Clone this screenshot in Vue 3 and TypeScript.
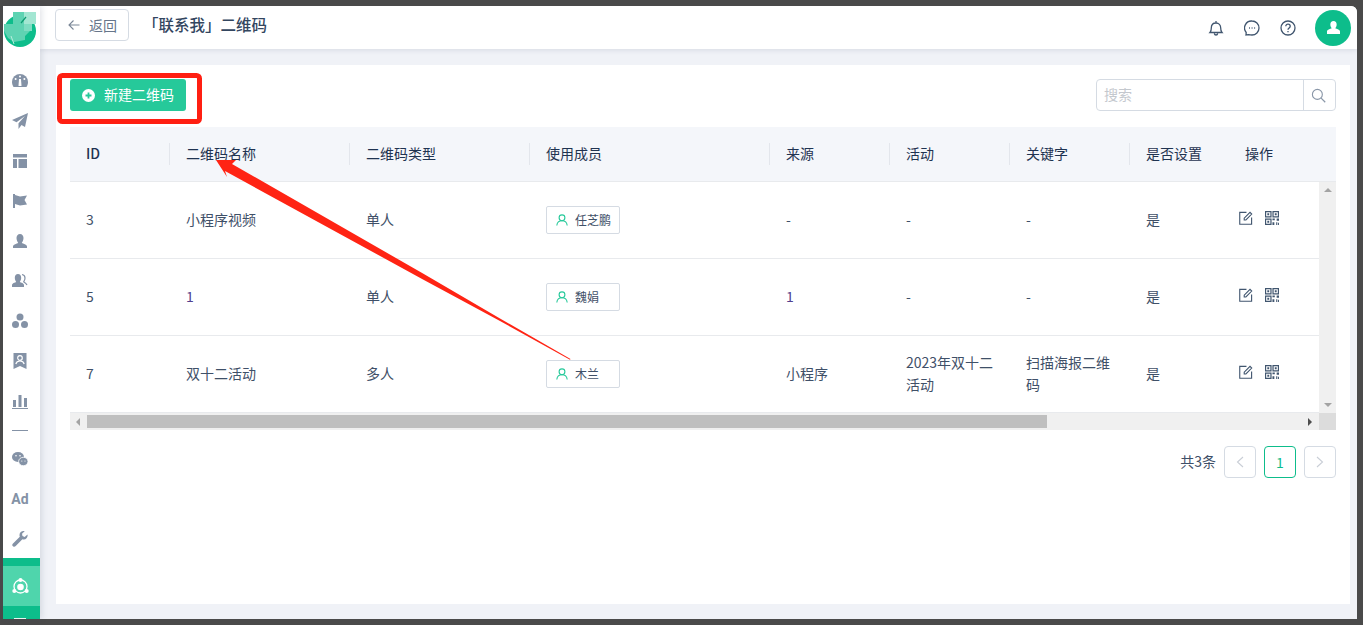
<script setup lang="ts">
interface Row { id: string; name: string; type: string; member: string; source: string; activity: string; keyword: string; linked?: boolean }
const headers = ['ID', '二维码名称', '二维码类型', '使用成员', '来源', '活动', '关键字', '是否设置', '操作']
const rows: Row[] = [
  { id: '3', name: '小程序视频', type: '单人', member: '任芝鹏', source: '-', activity: '-', keyword: '-' },
  { id: '5', name: '1', type: '单人', member: '魏娟', source: '1', activity: '-', keyword: '-', linked: true },
  { id: '7', name: '双十二活动', type: '多人', member: '木兰', source: '小程序', activity: '2023年双十二活动', keyword: '扫描海报二维码' },
]
</script>

<template>
  <div class="frame">
    <aside class="side">
      <div class="logo">
        <svg width="32" height="36" viewBox="0 0 32 36">
          <circle cx="16" cy="19" r="16" fill="#0dbd8b" />
          <path d="M9 0h11v12H9z" fill="#5ed3b2" />
          <path d="M20 0h12v12H20z" fill="#a3e6d2" />
          <path d="M0 12h26v7l-5 5v4l-11 2-6-4-4-7z" fill="#5ed3b2" />
          <path d="M20 12h8v7h-8z" fill="#7fdcc2" />
          <path d="M17 11l5-6" stroke="#0b9b70" stroke-width="1.200" />
          <path d="M7 24l3 8" stroke="#b9eedd" stroke-width="1" />
        </svg>
      </div>
      <nav class="nav">
        <svg class="ico" viewBox="0 0 16 16"><path d="M8 1a8 8 0 0 0-8 8c0 1.800.5 3.200 1.500 5h13c1-1.800 1.500-3.200 1.500-5a8 8 0 0 0-8-8z" /><path d="M7 6h2l.5 7h-3z" fill="#fff" /><circle cx="8" cy="3.600" r="1" fill="#fff" /><circle cx="3.600" cy="6" r="1" fill="#fff" /><circle cx="12.400" cy="6" r="1" fill="#fff" /></svg>
        <svg class="ico" viewBox="0 0 16 16"><path d="M16 0 0 7l4.500 2.200L13 3 6.500 10.300V16l3-4 3.500 2z" /></svg>
        <svg class="ico" viewBox="0 0 16 16"><path d="M1 1h14v3.500H1zM1 6h4v9H1zM6.500 6H15v9H6.500z" /></svg>
        <svg class="ico" viewBox="0 0 16 16"><path d="M1 1h2v14H1zM3 2l5 1.500 7-1-2.500 4.500 2.500 4.500-7 1-5-1.500z" /></svg>
        <svg class="ico" viewBox="0 0 16 16"><path d="M8 1c2.200 0 3.500 1.800 3.500 4S10.400 9 9.800 10c1.500.8 5.200 1.500 5.200 3.500V15H1v-1.500C1 11.500 4.700 10.800 6.200 10 5.600 9 4.500 7.200 4.500 5S5.800 1 8 1z" /></svg>
        <svg class="ico" viewBox="0 0 16 16"><path d="M6 1c2 0 3.200 1.700 3.200 3.700S8.300 8 7.800 9c1.300.7 4.200 1.300 4.200 3v2H0v-2c0-1.700 3-2.300 4.200-3C3.700 8 2.800 6.700 2.800 4.700S4 1 6 1z" /><path d="M10 1.500c1.800.3 3 1.700 3 3.500s-.8 2.800-1.300 3.800c1 .6 2.300 1.300 3.300 3.200" fill="none" stroke="#8492a6" stroke-width="1.200" /></svg>
        <svg class="ico" viewBox="0 0 16 16"><circle cx="8" cy="4" r="3.500" /><circle cx="3.500" cy="11.500" r="3.500" /><circle cx="12.500" cy="11.500" r="3.500" /></svg>
        <svg class="ico" viewBox="0 0 16 16"><path d="M1.500 0h13v16L8 13l-6.500 3z" /><circle cx="8" cy="5" r="2.300" fill="none" stroke="#fff" stroke-width="1.200" /><path d="M3.800 11c.5-2 2-3 4.200-3s3.700 1 4.200 3" fill="none" stroke="#fff" stroke-width="1.200" /></svg>
        <svg class="ico" viewBox="0 0 16 16"><path d="M1 7h3v7H1zM6.500 2h3v12h-3zM12 5h3v9h-3zM0 15h16v1H0z" /></svg>
        <div class="rule"></div>
        <svg class="ico" viewBox="0 0 16 16"><ellipse cx="6" cy="6" rx="6" ry="5" /><ellipse cx="11.300" cy="10.500" rx="4.700" ry="4.200" stroke="#fff" stroke-width=".8" /><circle cx="4" cy="4.800" r=".8" fill="#fff" /><circle cx="8" cy="4.800" r=".8" fill="#fff" /><circle cx="9.800" cy="10" r=".6" fill="#fff" /><circle cx="13" cy="10" r=".6" fill="#fff" /></svg>
        <div class="ad">Ad</div>
        <svg class="ico" viewBox="0 0 16 16"><path d="M15.500 3.500 12.600 6 10.500 5l-.5-2.200L12.700.3C10.500-.4 7.500 1 7.500 4c0 .7.100 1.200.3 1.700L1 12.500c-1 1-1 2 0 2.700.8.700 1.800.8 2.700-.2l6.700-6.700C13.500 9.500 16.200 6.700 15.500 3.500z" /></svg>
      </nav>
      <div class="active">
        <div class="active-inner">
          <svg width="17" height="17" viewBox="0 0 17 17">
            <circle cx="8.500" cy="8.500" r="6.500" fill="none" stroke="#fff" stroke-width="1.300" />
            <circle cx="8.500" cy="9" r="3.300" fill="#fff" />
            <circle cx="8.500" cy="2" r="2" fill="#fff" />
            <circle cx="2.300" cy="13" r="2" fill="#fff" />
            <circle cx="14.700" cy="13" r="2" fill="#fff" />
          </svg>
        </div>
        <div class="next-item"></div>
      </div>
    </aside>

    <div class="main">
      <header class="top">
        <button class="back">
          <svg width="12" height="12" viewBox="0 0 12 12"><path d="M11.500 6H1M5.500 1.500 1 6l4.500 4.500" fill="none" stroke="#7b8797" stroke-width="1.100" /></svg>
          <span>返回</span>
        </button>
        <h1 class="title">「联系我」二维码</h1>
        <div class="top-icons">
          <svg class="tool" viewBox="0 0 16 16"><path d="M2 12.500c1-1 1.300-2 1.300-4.500 0-3 1.900-5 4.700-5s4.700 2 4.700 5c0 2.500.3 3.500 1.300 4.500z M8 1v2M6.300 13.500c.2 1 .8 1.500 1.700 1.500s1.500-.5 1.700-1.500" /></svg>
          <svg class="tool" viewBox="0 0 16 16"><path d="M8 1a7 7 0 0 1 0 14c-1.500 0-2.600-.2-3.400-.4L2 15l.2-2.500A7 7 0 0 1 8 1z" /><path d="M5 8h.9M7.600 8h.9M10.200 8h.9" stroke-width="1.300" /></svg>
          <svg class="tool" viewBox="0 0 16 16"><circle cx="8" cy="8" r="7" /><path d="M5.800 6.300c0-1.300 1-2.100 2.200-2.100s2.200.8 2.200 2c0 1.700-2.200 1.700-2.200 3.500M8 11v1.200" /></svg>
          <div class="avatar">
            <svg width="13" height="13" viewBox="0 0 16 16"><path d="M8 0c2.400 0 3.900 1.900 3.900 4.300 0 2.200-1 3.600-1.700 4.700 1.600.9 5.800 1.500 5.800 4V16H0v-3c0-2.500 4.200-3.100 5.800-4C5.100 7.900 4.100 6.500 4.100 4.300 4.100 1.900 5.600 0 8 0z" fill="#fff" /></svg>
          </div>
        </div>
      </header>

      <section class="body">
        <div class="card">
          <div class="toolbar">
            <button class="create">
              <svg width="13" height="13" viewBox="0 0 13 13"><circle cx="6.500" cy="6.500" r="6.500" fill="#fff" /><path d="M6.500 3.500v6M3.500 6.500h6" stroke="#26c99a" stroke-width="1.800" /></svg>
              <span>新建二维码</span>
            </button>
            <div class="search">
              <span class="placeholder">搜索</span>
              <span class="search-btn">
                <svg width="15" height="15" viewBox="0 0 16 16"><circle cx="6.800" cy="6.800" r="5.300" fill="none" stroke="#8a97a8" stroke-width="1.200" /><path d="m10.800 10.800 4.400 4.400" stroke="#8a97a8" stroke-width="1.300" /></svg>
              </span>
            </div>
          </div>

          <div class="table">
            <div class="row head">
              <div v-for="h in headers" :key="h" class="cell"><span class="hd">{{ h }}</span></div>
            </div>
            <div class="scroll-y">
              <div class="rows">
                <div v-for="r in rows" :key="r.id" class="row item">
                  <div class="cell">{{ r.id }}</div>
                  <div class="cell" :class="{ link: r.linked }">{{ r.name }}</div>
                  <div class="cell">{{ r.type }}</div>
                  <div class="cell member">
                    <span class="tag">
                      <svg width="12" height="12" viewBox="0 0 12 12"><circle cx="6" cy="3.800" r="2.900" fill="none" stroke="#26c99a" stroke-width="1.100" /><path d="M.8 11.500c.3-2.800 2.300-4.700 5.200-4.700s4.900 1.900 5.200 4.700" fill="none" stroke="#26c99a" stroke-width="1.100" /></svg>
                      {{ r.member }}
                    </span>
                  </div>
                  <div class="cell" :class="{ link: r.linked }">{{ r.source }}</div>
                  <div class="cell">{{ r.activity }}</div>
                  <div class="cell">{{ r.keyword }}</div>
                  <div class="cell">是</div>
                  <div class="cell ops">
                    <svg width="14" height="14" viewBox="0 0 15 15"><path d="M8 1.500H.8v12.700h12.700V7" fill="none" stroke="#41566f" stroke-width="1.200" /><path d="M5.600 9.600V7.700L11.800 1.500l1.800 1.800-6.200 6.300z" fill="none" stroke="#41566f" stroke-width="1.200" /></svg>
                    <svg width="14" height="14" viewBox="0 0 15 15"><path d="M.6.600h5.800v5.800H.6zM8.600.600h5.800v5.800H8.600zM.6 8.600h5.800v5.800H.6z" fill="none" stroke="#41566f" stroke-width="1.300" /><path d="M2.500 2.500h2v2h-2zM10.500 2.500h2v2h-2zM2.500 10.500h2v2h-2zM8 8h2.500v2H8zM12.500 8H15v2.500h-2.500zM8 12h2v3H8zM12 12h1.200v3H12zM14 12.500h1V15h-1z" fill="#41566f" /></svg>
                  </div>
                </div>
              </div>
              <div class="vbar">
                <i class="arr up"></i>
                <i class="arr down"></i>
              </div>
            </div>
            <div class="hbar">
              <i class="arr left"></i>
              <div class="thumb"></div>
              <i class="arr right"></i>
              <div class="corner"></div>
            </div>
          </div>

          <div class="pager">
            <span class="total">共3条</span>
            <span class="pg off"><svg width="8" height="12" viewBox="0 0 8 12"><path d="M7 1 1.500 6 7 11" fill="none" stroke="#c9ced6" stroke-width="1.100" /></svg></span>
            <span class="pg on">1</span>
            <span class="pg off"><svg width="8" height="12" viewBox="0 0 8 12"><path d="m1 1 5.500 5L1 11" fill="none" stroke="#c9ced6" stroke-width="1.100" /></svg></span>
          </div>
        </div>
      </section>
    </div>

    <svg class="mark" width="1363" height="625" viewBox="0 0 1363 625">
      <rect x="59.500" y="75.500" width="140" height="46" rx="3" fill="none" stroke="#ff1f12" stroke-width="5" />
      <path d="M216 160 236 160 232 164 423 273.500 500 318.500 570.500 359 570 359.700 500 321 423 279.500 225 171 227 177z" fill="#ff2414" />
    </svg>
  </div>
</template>

<style>
html, body { margin: 0; background: #4a4a4a; }
</style>

<style scoped>
* { box-sizing: border-box; }
.frame {
  position: relative;
  width: 1363px;
  height: 625px;
  overflow: hidden;
  padding: 6px 6px 6px 3px;
  background: #4a4a4a;
  display: flex;
  font-family: "Noto Sans CJK SC", "Noto Sans", sans-serif;
  color: #3f5068;
}
.side {
  width: 37px;
  flex: none;
  background: #fff;
  display: flex;
  flex-direction: column;
  align-items: center;
  box-shadow: 2px 0 6px rgba(60, 70, 100, .14);
  position: relative;
  z-index: 2;
}
.logo { height: 42px; width: 100%; display: flex; padding: 6px 3px 0 0; justify-content: center; flex: none; }
.nav { display: flex; flex-direction: column; align-items: center; gap: 24px; padding: 25px 3px 0 0; flex: 1; width: 100%; }
.ico { width: 16px; height: 16px; fill: #8492a6; flex: none; }
.rule { width: 16px; height: 1px; background: #8492a6; margin: -3px 0 -4px; flex: none; }
.ad { font: 700 14px/16px Roboto, sans-serif; color: #8492a6; height: 16px; }
.active { height: 61px; width: 100%; background: #0dbd8b; padding-top: 8px; flex: none; }
.active-inner { height: 40px; background: #4fd5ac; display: flex; align-items: center; justify-content: center; padding-right: 3px; }
.next-item { width: 12px; height: 1px; margin: 12px 0 0 11px; background: #e4f8f1; }
.main { flex: 1; min-width: 0; display: flex; flex-direction: column; background: #f0f2f7; border-top-right-radius: 6px; overflow: hidden; }
.top {
  height: 43px;
  flex: none;
  background: #fff;
  display: flex;
  align-items: center;
  padding: 0 6px 0 15px;
  box-shadow: 0 1px 5px rgba(60, 70, 100, .14);
  position: relative;
}
.back {
  width: 74px;
  height: 32px;
  margin-top: -5px;
  border: 1px solid #d5dbe3;
  border-radius: 4px;
  background: #fff;
  display: flex;
  align-items: center;
  gap: 9px;
  padding: 0 0 0 12px;
  font: 14px "Noto Sans CJK SC", sans-serif;
  color: #66758a;
}
.back span { padding-bottom: 1px; }
.title { margin: -7px 0 0 14px; font-size: 15.5px; font-weight: 500; color: #33465f; }
.top-icons { margin-left: auto; display: flex; align-items: center; gap: 20px; }
.tool { width: 16px; height: 16px; fill: none; stroke: #41566f; stroke-width: 1.300; }
.avatar {
  width: 36px;
  height: 36px;
  margin-left: -1px;
  border-radius: 50%;
  background: #0dbd8b;
  display: flex;
  align-items: center;
  justify-content: center;
}
.body { flex: 1; padding: 16px 7px 15px 16px; min-height: 0; }
.card { height: 100%; background: #fff; padding: 14px 14px 0; display: flex; flex-direction: column; }
.toolbar { display: flex; justify-content: space-between; height: 32px; flex: none; }
.create {
  width: 116px;
  height: 32px;
  border: 0;
  border-radius: 3px;
  background: #26c99a;
  color: #fff;
  display: flex;
  align-items: center;
  gap: 9px;
  padding: 0 0 0 12px;
  font: 14px "Noto Sans CJK SC", sans-serif;
}
.create span { padding-bottom: 2px; }
.search {
  width: 240px;
  height: 32px;
  border: 1px solid #d5dbe3;
  border-radius: 4px;
  display: flex;
  align-items: center;
  justify-content: space-between;
  padding-left: 7px;
}
.placeholder { font-size: 14px; color: #c4c8ce; padding-bottom: 2px; }
.search-btn { width: 32px; height: 30px; border-left: 1px solid #d5dbe3; display: flex; align-items: center; justify-content: center; padding-right: 2px; }
.table { margin-top: 16px; flex: none; font-size: 14px; }
.row { display: grid; grid-template-columns: 100px 180px 180px 240px 120px 120px 120px 99px 1fr; }
.head { height: 55px; background: #f4f6fa; border-bottom: 1px solid #e8eaed; color: #1f3351; align-items: center; }
.head .cell { padding: 0 0 2px 16px; position: relative; }
.head .cell:first-child { font-weight: 500; }
.hd { display: block; line-height: 20px; }
.head .cell:not(:first-child):not(:last-child)::before {
  content: "";
  position: absolute;
  left: -1px;
  top: 0;
  height: 22px;
  width: 1px;
  background: #e3e6ec;
}
.scroll-y { display: flex; height: 231px; }
.rows { width: 1249px; flex: none; }
.item { height: 77px; border-bottom: 1px solid #e8eaed; align-items: center; }
.item .cell { padding: 0 16px 2px; line-height: 22px; }
.item .member { padding-bottom: 0; }
.link { color: #51408f; }
.tag {
  display: inline-flex;
  align-items: center;
  width: 74px;
  height: 28px;
  gap: 7px;
  padding-left: 9px;
  border: 1px solid #d5dbe3;
  border-radius: 2px;
  font-size: 12px;
  vertical-align: middle;
}
.item .ops { padding: 0 0 4px 10px; display: flex; gap: 12px; align-items: center; }
.ops svg { flex: none; }
.vbar { width: 17px; flex: none; background: #f0f0f0; display: flex; flex-direction: column; justify-content: space-between; align-items: center; padding: 6px 0; }
.hbar { height: 17px; background: #f0f0f0; display: flex; align-items: center; position: relative; padding-left: 17px; }
.thumb { width: 960px; height: 13px; background: #bfbfbf; }
.corner { width: 17px; height: 17px; background: #dcdcdc; margin-left: auto; }
.arr { display: block; width: 0; height: 0; border: 4px solid transparent; }
.arr.up { border-bottom-color: #a3a3a3; border-top-width: 0; }
.arr.down { border-top-color: #a3a3a3; border-bottom-width: 0; }
.arr.left { position: absolute; left: 6px; border-right-color: #a3a3a3; border-left-width: 0; }
.arr.right { position: absolute; right: 24px; border-left-color: #4d4d4d; border-right-width: 0; }
.pager { display: flex; justify-content: flex-end; align-items: center; gap: 8px; margin-top: 16px; font-size: 14px; }
.total { padding-bottom: 2px; }
.pg { width: 32px; height: 32px; border: 1px solid #d5dbe3; border-radius: 4px; display: flex; align-items: center; justify-content: center; }
.pg.on { border-color: #0dbd8b; color: #0dbd8b; }
.mark { position: absolute; left: 0; top: 0; pointer-events: none; z-index: 5; }
</style>
